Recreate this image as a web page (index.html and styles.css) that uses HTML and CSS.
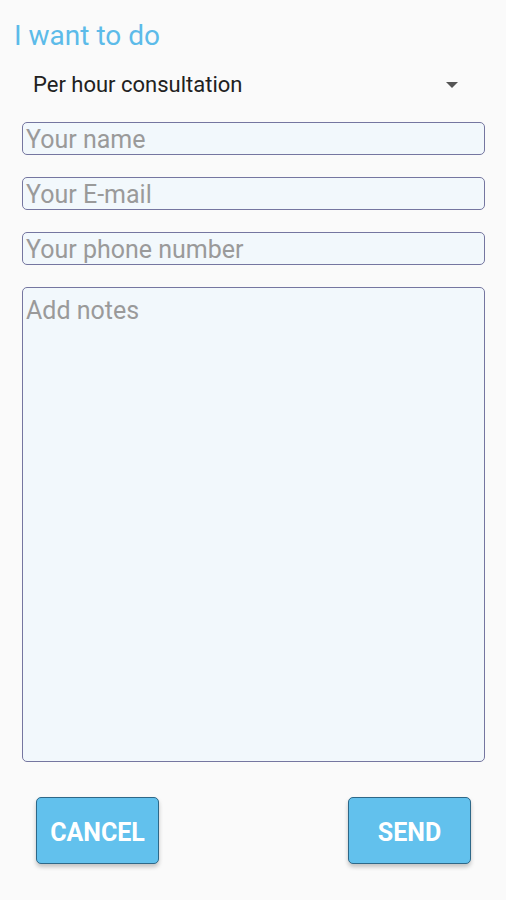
FILE: index.html
```html
<!DOCTYPE html>
<html>
<head>
<meta charset="utf-8">
<link rel="stylesheet" href="styles.css">
</head>
<body>
<div class="page">
  <h1 class="title">I want to do</h1>
  <div class="select">
    <span class="select-text">Per hour consultation</span>
    <svg class="caret" width="12" height="6" viewBox="0 0 12 6"><path d="M0 0 L12 0 L6 6 Z" fill="#555"/></svg>
  </div>
  <div class="fields">
    <div class="field"><span class="ph">Your name</span></div>
    <div class="field"><span class="ph">Your E-mail</span></div>
    <div class="field"><span class="ph">Your phone number</span></div>
    <div class="field notes"><span class="ph">Add notes</span></div>
  </div>
  <div class="actions">
    <button class="btn">CANCEL</button>
    <button class="btn">SEND</button>
  </div>
</div>
</body>
</html>
```
FILE: styles.css
```css
html, body {
  margin: 0;
  padding: 0;
  background: #fafafa;
  font-family: Roboto, "Liberation Sans", sans-serif;
}
.page {
  width: 506px;
  height: 900px;
  box-sizing: border-box;
  padding: 18px 0 0 0;
}
.title {
  margin: 0 0 0 14px;
  font-weight: 400;
  font-size: 28px;
  line-height: 35px;
  color: #5cbbe9;
}
.select {
  display: flex;
  align-items: center;
  justify-content: space-between;
  margin: 14px 48px 0 33px;
  height: 34px;
}
.select-text {
  font-size: 22px;
  color: #212121;
}
.caret {
  display: block;
  margin-top: 1px;
}
.fields {
  display: flex;
  flex-direction: column;
  gap: 22px;
  margin: 21px 21px 0 22px;
}
.field {
  height: 33px;
  box-sizing: border-box;
  border: 1.5px solid #7576a0;
  border-radius: 5px;
  background: #f2f8fc;
  padding: 2px 3px 0 3px;
  display: flex;
  align-items: center;
}
.ph {
  font-size: 25px;
  color: #9a9a9a;
  line-height: 30px;
}
.notes {
  height: 475px;
  align-items: flex-start;
  padding-top: 8px;
}
.actions {
  display: flex;
  justify-content: space-between;
  margin: 35px 35px 0 36px;
}
.btn {
  width: 123px;
  height: 67px;
  background: #62c1ed;
  border: 1px solid #2e6888;
  border-radius: 5px;
  color: #ffffff;
  font-family: Roboto, "Liberation Sans", sans-serif;
  font-weight: 700;
  font-size: 25px;
  box-shadow: 0 3px 4px rgba(0,0,0,0.22);
  padding: 4px 0 0 0;
}
```
